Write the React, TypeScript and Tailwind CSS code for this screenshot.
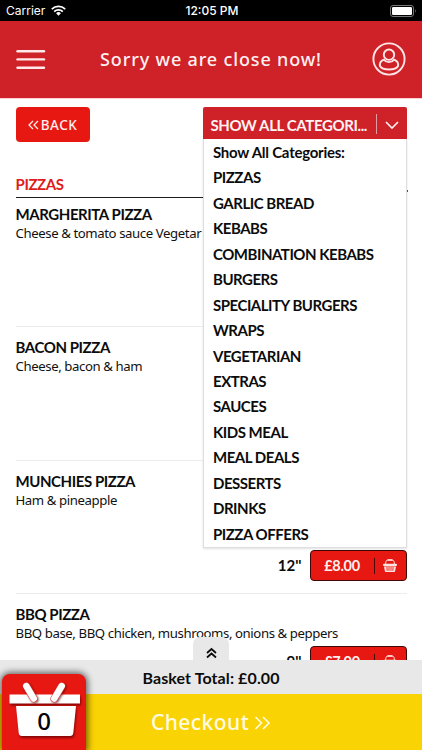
type Size = { label: string; price: string };
type Pizza = { name: string; description: string; sizes: Size[] };

const CATEGORIES = [
  'Show All Categories:',
  'PIZZAS',
  'GARLIC BREAD',
  'KEBABS',
  'COMBINATION KEBABS',
  'BURGERS',
  'SPECIALITY BURGERS',
  'WRAPS',
  'VEGETARIAN',
  'EXTRAS',
  'SAUCES',
  'KIDS MEAL',
  'MEAL DEALS',
  'DESSERTS',
  'DRINKS',
  'PIZZA OFFERS',
];

const PIZZAS: Pizza[] = [
  { name: 'MARGHERITA PIZZA', description: 'Cheese & tomato sauce Vegetar', sizes: [] },
  { name: 'BACON PIZZA', description: 'Cheese, bacon & ham', sizes: [] },
  { name: 'MUNCHIES PIZZA', description: 'Ham & pineapple', sizes: [{ label: "12''", price: '£8.00' }] },
  {
    name: 'BBQ PIZZA',
    description: 'BBQ base, BBQ chicken, mushrooms, onions & peppers',
    sizes: [{ label: "9''", price: '£7.00' }],
  },
];

const WifiIcon = () => (
  <svg width="15" height="11" viewBox="0 0 15 11" fill="none" stroke="white" strokeWidth="1.8" aria-hidden>
    <path d="M0.8 4.1 A9.6 9.6 0 0 1 14.2 4.1" />
    <path d="M3.2 6.6 A6.2 6.2 0 0 1 11.8 6.6" />
    <path d="M5.1 8.3 A3.4 3.4 0 0 1 9.9 8.3 L7.5 10.8 Z" fill="white" stroke="none" />
  </svg>
);

const BatteryIcon = () => (
  <svg width="27" height="12" viewBox="0 0 27 12" aria-hidden>
    <rect x="0.5" y="0.5" width="23" height="11" rx="2.5" fill="none" stroke="#777" />
    <rect x="2" y="2" width="20" height="8" rx="1.2" fill="white" />
    <path d="M25 4 Q26.6 6 25 8 Z" fill="#777" />
  </svg>
);

const MenuIcon = () => (
  <svg width="30" height="22" viewBox="0 0 30 22" stroke="#ffe9e9" strokeWidth="2.4" strokeLinecap="round" aria-hidden>
    <line x1="1.5" y1="2.2" x2="28" y2="2.2" />
    <line x1="1.5" y1="10.4" x2="28" y2="10.4" />
    <line x1="1.5" y1="18.7" x2="28" y2="18.7" />
  </svg>
);

const UserIcon = () => (
  <svg className="mb-[2px]" width="34" height="34" viewBox="0 0 34 34" fill="none" stroke="#ffe6e6" strokeWidth="1.9" aria-hidden>
    <circle cx="17" cy="17" r="15.6" />
    <circle cx="17" cy="12.7" r="5.2" />
    <path d="M11.8 17.6 C8.8 18.8 7.6 21.4 7.9 24 C10.4 28.6 23.6 28.6 26.1 24 C26.4 21.4 25.2 18.8 22.2 17.6 C19.4 21 14.6 21 11.8 17.6 Z" strokeLinejoin="round" />
  </svg>
);

const BasketIcon = () => (
  <svg width="14" height="14" viewBox="0 0 14 14" fill="none" aria-hidden>
    <path d="M2.6 5.5 C2.6 2.2 3.4 1 5 1 H9 C10.6 1 11.4 2.2 11.4 5.5" stroke="#ffe3df" strokeWidth="1" />
    <rect x="4.4" y="0.2" width="5.2" height="1.6" rx="0.8" fill="#ffe3df" />
    <rect x="0" y="4.8" width="14" height="2.2" rx="1" fill="#ffe3df" />
    <path d="M1 7.4 H13 L12.1 12.3 Q12 13 11.2 13 H2.8 Q2 13 1.9 12.3 Z" fill="#ffe3df" />
    <path d="M3.9 8 L4.2 11.8 M6 8 V11.8 M8 8 V11.8 M10.1 8 L9.8 11.8" stroke="#e71812" strokeWidth="0.9" />
  </svg>
);

function Chevrons({ className, d, width, height }: { className: string; d: string; width: number; height: number }) {
  return (
    <svg className={className} width={width} height={height} viewBox={`0 0 ${width} ${height}`} fill="none" stroke="currentColor" aria-hidden>
      <path d={d} />
    </svg>
  );
}

function PriceRow({ size }: { size: Size }) {
  return (
    <div className="flex items-center justify-end gap-[8px]">
      <span className="text-[15px] font-bold">{size.label}</span>
      <button className="flex h-[31px] w-[97px] items-center rounded-[4px] border border-[#3d0805] bg-[#e71812] text-[#fff0ee]">
        <span className="flex-1 text-center text-[14.5px] font-bold tracking-[-0.3px]">{size.price}</span>
        <span className="h-4 w-px bg-[#4a0a08]" />
        <span className="flex w-[31px] justify-center">
          <BasketIcon />
        </span>
      </button>
    </div>
  );
}

function PizzaItem({ pizza }: { pizza: Pizza }) {
  return (
    <li className="flex h-[133.4px] flex-col border-b border-[#ececec] pt-[10px] first:h-[130.4px] first:pt-[7px]">
      <h3 className="h-[20px] text-[15px] leading-[20px] font-bold tracking-[-0.43px] whitespace-nowrap">{pizza.name}</h3>
      <p className="h-[18px] font-['Noto_Sans',sans-serif] text-[13.2px] leading-[18px] tracking-[-0.41px] whitespace-nowrap text-[#111]">
        {pizza.description}
      </p>
      <div className={pizza.name === 'BBQ PIZZA' ? 'mt-[4px]' : 'mt-auto mb-[12px]'}>
        {pizza.sizes.map((size) => (
          <PriceRow key={size.label} size={size} />
        ))}
      </div>
    </li>
  );
}

function CategorySelect() {
  return (
    <div className="relative w-[204px]">
      <button className="flex h-8 w-full items-center rounded-t-[2px] bg-[#cf2128] text-[#fff2f2]">
        <span className="flex-1 pt-[5px] pl-2 text-left text-[15px] font-bold tracking-[-0.38px] whitespace-nowrap">SHOW ALL CATEGORI...</span>
        <span className="mt-0.5 h-5 w-px bg-[#e69a9d]" />
        <span className="flex w-[30px] justify-center pt-1">
          <Chevrons className="stroke-[1.6]" width={14} height={10} d="M1 2 L7 8 L13 2" />
        </span>
      </button>
      {/* open list, lies over the menu below */}
      <ul className="absolute top-8 left-0 z-10 h-[409px] w-[204px] border border-t-0 border-[#dedede] bg-white shadow-[0_1px_2px_rgba(0,0,0,0.12)]">
        {CATEGORIES.map((category, i) => (
          <li
            key={category}
            className={`h-[25.45px] pl-[9.5px] text-[15px] leading-[26.2px] font-bold whitespace-nowrap ${
              i === 0 ? 'tracking-[-0.25px]' : 'tracking-[-0.48px]'
            }`}
          >
            {category}
          </li>
        ))}
      </ul>
    </div>
  );
}

function BasketBadge() {
  return (
    <div className="absolute bottom-0 left-[2px] h-[76px] w-[84px] rounded-t-[8px] bg-[#e71812] shadow-[0_0_6px_2px_rgba(0,0,0,0.55)]">
      <svg width="84" height="76" viewBox="0 0 84 76" aria-hidden>
        <g className="drop-shadow-[1px_2px_1px_rgba(90,0,0,0.7)]">
          <path d="M7.5 20.5 H78 V29.5 H7.5 Z" fill="white" />
          <path d="M14 32 H74 L71.3 59 Q71 62 68 62 H20 Q17 62 16.7 59 Z" fill="white" />
        </g>
        <g className="drop-shadow-[1px_1px_1px_rgba(90,0,0,0.7)]" strokeLinecap="round">
          <path d="M24.3 12 L31.8 24.6" stroke="#e0433e" strokeWidth="7.4" />
          <path d="M59.7 12 L52.2 24.6" stroke="#e0433e" strokeWidth="7.4" />
          <path d="M24.3 12 L31.8 24.6" stroke="white" strokeWidth="6.4" />
          <path d="M59.7 12 L52.2 24.6" stroke="white" strokeWidth="6.4" />
        </g>
      </svg>
      <span className="absolute top-[31px] left-0 w-full text-center font-['Noto_Sans',sans-serif] text-[24px] leading-[31px] font-medium text-black">0</span>
    </div>
  );
}

export default function App() {
  return (
    <div className="flex h-[750px] w-[422px] flex-col overflow-hidden bg-white font-['Lato',sans-serif] text-[#0c0c0c]">
      <div className="grid h-[21px] shrink-0 grid-cols-3 items-center bg-black pr-[6px] pl-[6px] font-['Inter',sans-serif] text-[12px] text-white">
        <span className="flex items-center gap-[6px]">
          Carrier <WifiIcon />
        </span>
        <span className="pl-0.5 text-center font-medium">12:05 PM</span>
        <span className="-mr-[1px] flex justify-end">
          <BatteryIcon />
        </span>
      </div>

      <header className="flex h-[78px] shrink-0 items-center justify-between border-b border-[#ffcfd3] bg-[#cf2128] pr-4 pl-4">
        <MenuIcon />
        <h1 className="pl-1 font-['Noto_Sans',sans-serif] text-[18px] font-medium tracking-[0.85px] whitespace-nowrap text-[#fff0f0]">
          Sorry we are close now!
        </h1>
        <UserIcon />
      </header>

      <main className="flex h-[561px] shrink-0 flex-col overflow-hidden px-[15.5px] pt-2">
        <div className="flex shrink-0 items-start justify-between">
          <button className="flex h-[35px] w-[74px] items-center justify-center gap-[2px] rounded-[4px] bg-[#e71812] pt-px font-['Noto_Sans',sans-serif] text-[13.5px] font-medium tracking-[0.5px] text-[#fff0ee]">
            <Chevrons className="stroke-[1.2]" width={11} height={10} d="M5 1 L1 5 L5 9 M10 1 L6 5 L10 9" />
            BACK
          </button>
          <CategorySelect />
        </div>
        <h2 className="relative mt-[32px] h-[24px] shrink-0 border-b border-[#1c1c1c] text-[15px] leading-[20px] font-bold tracking-[-0.4px] text-[#e01b1b]">
          PIZZAS
          <span className="absolute top-[16px] -right-[1.5px] size-[1.5px] bg-[#e01b1b]" />
        </h2>
        <ul className="-mt-px shrink-0">
          {PIZZAS.map((pizza) => (
            <PizzaItem key={pizza.name} pizza={pizza} />
          ))}
        </ul>
      </main>

      <footer className="relative h-[90px] shrink-0">
        <div className="absolute -top-[23px] left-[193px] flex h-[23px] w-9 justify-center rounded-t-[7px] bg-[#e8e8e8] pt-[10px]">
          <Chevrons className="stroke-[1.7]" width={11} height={12} d="M1 6 L5.5 2 L10 6 M1 10.5 L5.5 6.5 L10 10.5" />
        </div>
        <div className="h-[34px] bg-[#e8e8e8] text-center text-[16px] leading-[35px] font-bold tracking-[0.1px]">Basket Total: £0.00</div>
        <button className="flex h-14 w-full items-center justify-center gap-[5px] bg-[#fad304] pt-0.5 font-['Noto_Sans',sans-serif] text-[21px] font-medium tracking-[0.45px] text-[#fffbe0]">
          Checkout
          <Chevrons className="stroke-[1.7]" width={17} height={14} d="M1.5 1 L7.5 7 L1.5 13 M9 1 L15 7 L9 13" />
        </button>
        <BasketBadge />
      </footer>
    </div>
  );
}
